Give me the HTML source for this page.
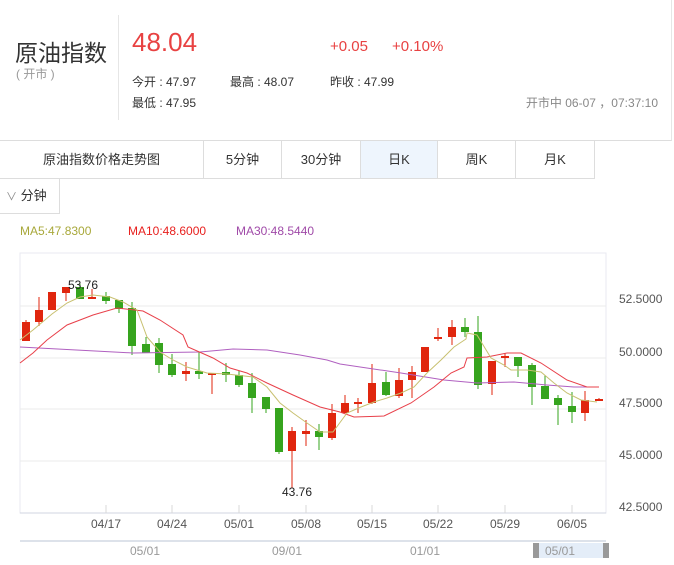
<!DOCTYPE html>
<html><head><meta charset="utf-8"><style>
*{margin:0;padding:0;box-sizing:border-box}
body{width:674px;height:565px;background:#fff;font-family:"Liberation Sans","Noto Sans CJK SC",sans-serif;color:#333;position:relative;overflow:hidden}
.a{position:absolute;white-space:nowrap}
.tab{position:absolute;top:141px;height:37px;border-right:1px solid #ddd;font-size:13px;line-height:37px;text-align:center;color:#333}
</style></head><body>
<div class="a" style="left:0;top:0;width:672px;height:141px;border-right:1px solid #e6e6e6;border-bottom:1px solid #ddd"></div>
<div class="a" style="left:15px;top:34px;font-size:23px;color:#333">原油指数</div>
<div class="a" style="left:16px;top:65px;font-size:12px;color:#999">( 开市 )</div>
<div class="a" style="left:118px;top:15px;width:1px;height:105px;background:#e6e6e6"></div>
<div class="a" style="left:132px;top:27px;font-size:26px;color:#e84242">48.04</div>
<div class="a" style="left:330px;top:38px;font-size:15px;color:#e84242">+0.05</div>
<div class="a" style="left:392px;top:38px;font-size:15px;color:#e84242">+0.10%</div>
<div class="a" style="left:132px;top:73px;font-size:12px">今开 : 47.97</div>
<div class="a" style="left:230px;top:73px;font-size:12px">最高 : 48.07</div>
<div class="a" style="left:330px;top:73px;font-size:12px">昨收 : 47.99</div>
<div class="a" style="left:132px;top:94px;font-size:12px">最低 : 47.95</div>
<div class="a" style="right:16px;top:94px;font-size:12px;color:#888">开市中 06-07 ，07:37:10</div>
<div class="a" style="left:0;top:178px;width:595px;height:1px;background:#ddd"></div>
<div class="tab" style="left:0;width:204px">原油指数价格走势图</div>
<div class="tab" style="left:204px;width:78px">5分钟</div>
<div class="tab" style="left:282px;width:79px">30分钟</div>
<div class="tab" style="left:361px;width:77px;background:#eef5fd">日K</div>
<div class="tab" style="left:438px;width:78px">周K</div>
<div class="tab" style="left:516px;width:79px">月K</div>
<div class="a" style="left:0;top:179px;width:60px;height:35px;border-right:1px solid #ddd;border-bottom:1px solid #ddd;font-size:13px;line-height:34px;padding-left:6px"><span style="color:#888;font-size:11px">∨</span> 分钟</div>
<div class="a" style="left:20px;top:224px;font-size:12px;color:#a8a83a">MA5:47.8300</div>
<div class="a" style="left:128px;top:224px;font-size:12px;color:#e8201e">MA10:48.6000</div>
<div class="a" style="left:236px;top:224px;font-size:12px;color:#a04aa8">MA30:48.5440</div>
<svg class="a" style="left:0;top:0" width="674" height="565" xmlns="http://www.w3.org/2000/svg">
<rect x="20" y="253" width="586" height="260" fill="none" stroke="#e8eaf0"/>
<g stroke="#ebebeb"><line x1="20" y1="306" x2="606" y2="306"/><line x1="20" y1="358" x2="606" y2="358"/><line x1="20" y1="409" x2="606" y2="409"/><line x1="20" y1="461" x2="606" y2="461"/></g>
<line x1="20" y1="513" x2="606" y2="513" stroke="#d0d4e0"/>
<g stroke="#d8d8d8"><line x1="106" y1="505" x2="106" y2="513"/><line x1="172" y1="505" x2="172" y2="513"/><line x1="239" y1="505" x2="239" y2="513"/><line x1="306" y1="505" x2="306" y2="513"/><line x1="372" y1="505" x2="372" y2="513"/><line x1="438" y1="505" x2="438" y2="513"/><line x1="505" y1="505" x2="505" y2="513"/><line x1="572" y1="505" x2="572" y2="513"/></g>
<g font-family="Liberation Sans,sans-serif" font-size="12" fill="#555" text-anchor="middle">
<text x="106" y="528">04/17</text><text x="172" y="528">04/24</text><text x="239" y="528">05/01</text><text x="306" y="528">05/08</text><text x="372" y="528">05/15</text><text x="438" y="528">05/22</text><text x="505" y="528">05/29</text><text x="572" y="528">06/05</text>
</g>
<g font-family="Liberation Sans,sans-serif" font-size="12" fill="#555">
<text x="619" y="303">52.5000</text><text x="619" y="356">50.0000</text><text x="619" y="407">47.5000</text><text x="619" y="459">45.0000</text><text x="619" y="511">42.5000</text>
</g>
<line x1="20" y1="541" x2="606" y2="541" stroke="#dde2ea" stroke-width="2"/>
<rect x="536" y="543" width="70" height="15" fill="#e4edf8"/>
<rect x="533" y="543" width="6" height="15" fill="#999"/><rect x="603" y="543" width="6" height="15" fill="#999"/>
<g font-family="Liberation Sans,sans-serif" font-size="12" fill="#999" text-anchor="middle">
<text x="145" y="555">05/01</text><text x="287" y="555">09/01</text><text x="425" y="555">01/01</text><text x="560" y="555">05/01</text>
</g>
<g id="c"></g>
<polyline fill="none" stroke="#b060c0" stroke-width="1" points="20,347 133,353 200,352 233,349 267,350 300,355 327,360 340,364 401,373 444,380 477,383 514,382 547,385 574,387 599,387"/>
<polyline fill="none" stroke="#e8404a" stroke-width="1" points="20,363 33,353 47,340 67,325 93,315 117,308 143,311 160,320 183,335 188,347 213,358 230,368 247,373 267,383 293,395 320,407 340,412 354,417 384,416 411,403 434,387 451,373 464,367 467,358 487,357 507,353 521,353 541,363 567,380 587,387 599,387"/>
<polyline fill="none" stroke="#c8c070" stroke-width="1" points="20,340 33,330 52,314 67,303 80,297 93,295 110,297 123,302 137,310 147,337 160,352 173,360 187,367 207,373 227,374 253,377 267,387 280,403 293,413 307,423 320,432 333,432 347,413 361,407 374,402 387,398 401,393 414,387 427,373 441,360 454,347 466,339 467,333 477,335 491,358 504,365 511,370 527,370 541,372 554,383 567,393 581,400 597,402"/>
<g font-family="Liberation Sans,sans-serif" font-size="12" fill="#222"><text x="68" y="289">53.76</text><text x="282" y="496">43.76</text></g>
</svg>
<script>
var d=[[26,'r',322,341,320,341],[39,'r',310,322,297,326],[52,'r',292,310,292,310],[66,'r',287,293,287,301],[80,'g',287,299,284,299],[92,'r',297,299,289,299],[106,'g',296,301,292,304],[119,'g',300,309,300,313],[132,'g',308,346,302,355],[146,'g',344,353,337,353],[159,'g',343,365,338,373],[172,'g',364,375,354,377],[186,'r',371,374,362,381],[199,'g',371,374,352,379],[212,'r',373,375,373,394],[226,'g',372,375,363,382],[239,'g',375,385,371,387],[252,'g',383,398,373,413],[266,'g',397,409,397,413],[279,'g',408,452,408,454],[292,'r',431,451,427,488],[306,'r',431,434,420,446],[319,'g',431,437,424,450],[332,'r',413,438,404,440],[345,'r',403,413,395,413],[358,'r',402,404,398,413],[372,'r',383,403,364,404],[386,'g',382,395,372,396],[399,'r',380,396,368,398],[412,'r',372,380,366,398],[425,'r',347,372,347,372],[438,'r',337,339,328,341],[452,'r',327,337,320,345],[465,'g',327,332,318,337],[478,'g',332,385,316,389],[492,'r',361,384,361,395],[505,'r',356,358,353,367],[518,'g',357,366,357,377],[532,'g',365,387,363,405],[545,'g',386,399,375,399],[558,'g',398,405,395,425],[572,'g',406,412,392,423],[585,'r',400,413,391,421],[599,'r',399,401,398,401]];
var s='';d.forEach(function(c){var col=c[1]=='r'?'#e0260e':'#36a41e';s+='<line x1="'+c[0]+'" y1="'+c[4]+'" x2="'+c[0]+'" y2="'+c[5]+'" stroke="'+col+'"/><rect x="'+(c[0]-4)+'" y="'+c[2]+'" width="8" height="'+Math.max(2,c[3]-c[2])+'" fill="'+col+'"/>';});
document.getElementById('c').innerHTML=s;
</script>
</body></html>
